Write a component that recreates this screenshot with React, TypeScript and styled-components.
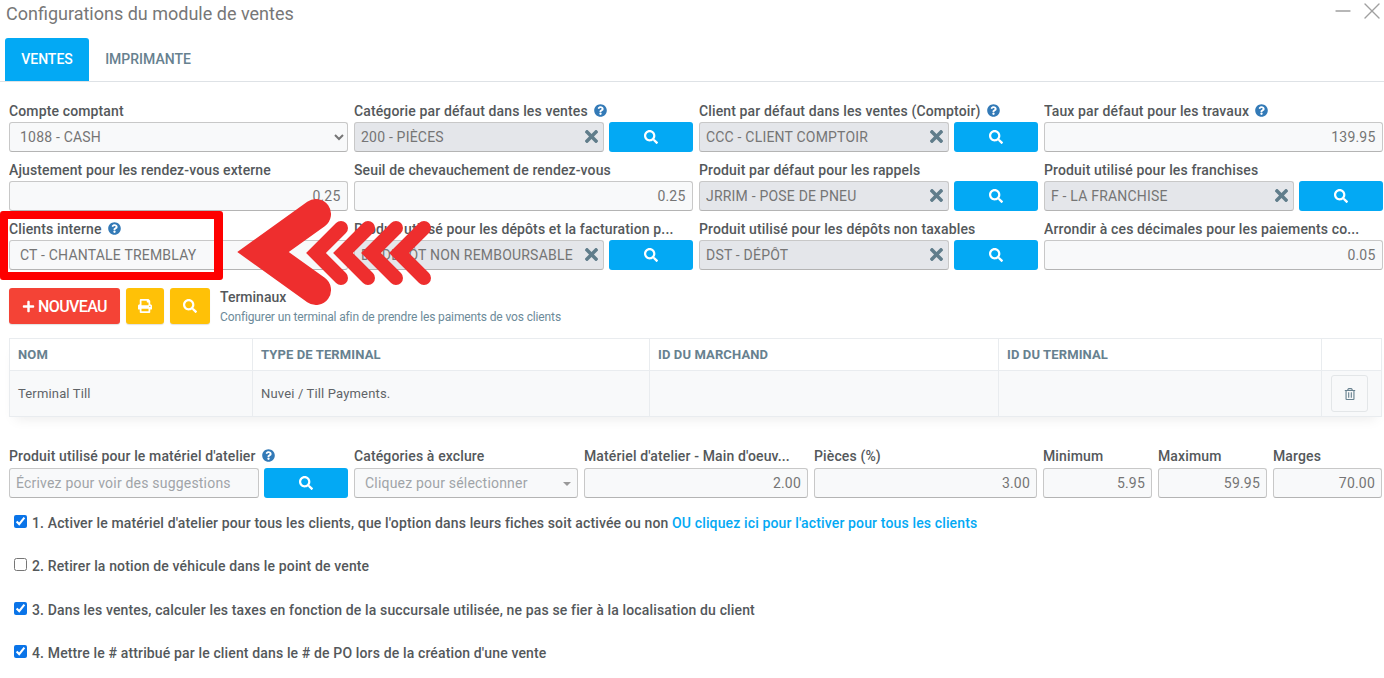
import styled, { createGlobalStyle } from 'styled-components';
import { FaPlus, FaPrint, FaQuestionCircle, FaRegTrashAlt, FaSearch, FaTimes } from 'react-icons/fa';
import { Minus, X } from 'lucide-react';

const GlobalStyle = createGlobalStyle`
  html, body {
    margin: 0;
    padding: 0;
    background: #fff;
    font-family: Roboto, "Liberation Sans", sans-serif;
    font-size: 14px;
    color: #555;
    overflow: hidden;
  }
`;

const Page = styled.div`
  position: relative;
  width: 1384px;
  height: 678px;
  overflow: hidden;
`;

const Header = styled.header`
  height: 38px;
  padding: 3px 0 0 6px;
  box-sizing: border-box;
  display: flex;
  justify-content: space-between;
  align-items: flex-start;
  color: #777;

  h1 {
    margin: 0;
    font-size: 18px;
    line-height: 22px;
    font-weight: 400;
  }

  .controls {
    display: flex;
    align-items: center;
    gap: 3px;
    margin: -6px -2px 0 0;
    color: #a0a0a0;
  }
`;

const Tabs = styled.nav`
  display: flex;
  height: 44px;
  padding-left: 5px;
  border-bottom: 1px solid #dee2e6;
  box-sizing: border-box;
`;

const Tab = styled.div<{ $active?: boolean }>`
  display: flex;
  align-items: center;
  justify-content: center;
  height: 43px;
  padding-bottom: 1px;
  box-sizing: border-box;
  width: ${p => (p.$active ? '84px' : '118px')};
  border-radius: 3px 3px 0 0;
  font-size: 14px;
  font-weight: 500;
  color: ${p => (p.$active ? '#fff' : '#67818f')};
  background: ${p => (p.$active ? '#03a9f4' : 'transparent')};
`;

const FieldGrid = styled.section`
  display: grid;
  grid-template-columns: repeat(4, 338.5px);
  column-gap: 6.5px;
  row-gap: 9px;
  padding: 20px 0 0 9px;
`;

const Field = styled.div`
  min-width: 0;
`;

const Label = styled.label`
  display: flex;
  align-items: center;
  gap: 6px;
  height: 20px;
  padding-bottom: 3px;
  box-sizing: border-box;
  font-size: 14px;
  font-weight: 500;
  letter-spacing: 0.13px;
  color: #54585b;
  white-space: nowrap;
  overflow: hidden;

  svg {
    flex: none;
    color: #337ab7;
    font-size: 13px;
  }
`;

const BottomLabel = styled(Label)`
  height: 22px;
`;

const Input = styled.input<{ $grey?: boolean; $right?: boolean; $inset?: boolean }>`
  display: block;
  width: 100%;
  height: 30px;
  box-sizing: border-box;
  padding: 0 6px 0 ${p => (p.$inset ? '10px' : '6px')};
  border: 1px solid #c8c8c8;
  border-bottom-color: #b4b4b4;
  border-radius: 3px;
  background: ${p => (p.$grey ? '#e4e6ea' : '#f8f9fa')};
  color: #757575;
  font: 400 14px Roboto, "Liberation Sans", sans-serif;
  letter-spacing: 0.2px;
  text-align: ${p => (p.$right ? 'right' : 'left')};
  outline: none;

  &::placeholder {
    color: #a0a4a8;
    opacity: 1;
  }
`;

const Select = styled.select`
  display: block;
  width: 100%;
  height: 30px;
  box-sizing: border-box;
  padding: 0 6px;
  border: 1px solid #c8c8c8;
  border-bottom-color: #b4b4b4;
  border-radius: 3px;
  background: #f8f9fa;
  color: #757575;
  font: 400 14px Roboto, "Liberation Sans", sans-serif;
  letter-spacing: 0.2px;
`;

const SearchRow = styled.div`
  display: flex;
  gap: 5px;
`;

const ClearableBox = styled.div`
  position: relative;
  flex: 1;
  min-width: 0;

  svg {
    position: absolute;
    top: 5px;
    right: 3px;
    font-size: 19px;
    color: #607d8b;
  }
`;

const SearchButton = styled.button`
  flex: none;
  width: 84px;
  height: 30px;
  border: 0;
  border-radius: 3px;
  background: #03a9f4;
  color: #fff;
  display: flex;
  align-items: center;
  justify-content: center;
  font-size: 14px;
  padding: 0;
`;

const Toolbar = styled.div`
  display: flex;
  align-items: flex-start;
  gap: 6px;
  margin-top: 18px;
  padding-left: 9px;
  height: 36px;
`;

const DangerButton = styled.button`
  width: 111px;
  height: 36px;
  border: 0;
  border-radius: 3px;
  background: #f44336;
  color: #fff;
  display: flex;
  align-items: center;
  justify-content: center;
  gap: 3px;
  font: 500 16px Roboto, "Liberation Sans", sans-serif;
  letter-spacing: -0.6px;
  padding: 0;
  box-shadow: 0 1px 1px rgba(0, 0, 0, 0.12);

  svg {
    font-size: 13px;
  }
`;

const WarningButton = styled.button<{ $width: number }>`
  width: ${p => p.$width}px;
  height: 36px;
  border: 0;
  border-radius: 3px;
  background: #ffc107;
  color: #fff;
  display: flex;
  align-items: center;
  justify-content: center;
  font-size: 14px;
  padding: 0;
  box-shadow: 0 1px 1px rgba(0, 0, 0, 0.12);
`;

const ToolbarText = styled.div`
  margin-left: 4px;

  strong {
    display: block;
    font-size: 14px;
    line-height: 18px;
    font-weight: 500;
    color: #54585b;
  }

  span {
    display: block;
    margin-top: 3px;
    font-size: 12px;
    line-height: 16px;
    letter-spacing: -0.13px;
    color: #6c8a99;
  }
`;

const TableWrap = styled.div`
  margin: 14px 2px 0 9px;
  box-shadow: 0 8px 12px -6px rgba(0, 0, 0, 0.08);
`;

const Table = styled.table`
  width: 100%;
  border-collapse: collapse;
  table-layout: fixed;

  th,
  td {
    border: 1px solid #e9ecef;
    padding: 0 8px;
    text-align: left;
  }

  th {
    height: 31px;
    font-size: 13px;
    font-weight: 700;
    letter-spacing: 0.12px;
    color: #67818f;
  }

  td {
    height: 45px;
    background: #f8f9fa;
    font-size: 13px;
    letter-spacing: 0.16px;
    color: #606468;
  }
`;

const TrashButton = styled.button`
  display: flex;
  align-items: center;
  justify-content: center;
  width: 37px;
  height: 37px;
  margin-left: 1px;
  padding: 0;
  border: 1px solid #e3e6e8;
  border-radius: 3px;
  background: #f8f9fa;
  color: #67818f;
  font-size: 12px;
`;

const BottomRow = styled.section`
  display: grid;
  grid-template-columns: 339px 224px 224px 223px 109px 109px 109px;
  column-gap: 6px;
  margin-top: 29px;
  padding-left: 9px;
`;

const SuggestRow = styled.div`
  display: flex;
  gap: 5px;
`;

const FakeSelect = styled.div`
  position: relative;
  height: 30px;
  box-sizing: border-box;
  padding-left: 10px;
  display: flex;
  align-items: center;
  border: 1px solid #c8c8c8;
  border-bottom-color: #b4b4b4;
  border-radius: 3px;
  background: #f8f9fa;
  color: #a0a4a8;
  letter-spacing: 0.2px;

  &::after {
    content: '';
    position: absolute;
    right: 6px;
    top: 13px;
    border: 4px solid transparent;
    border-top-color: #999;
    border-bottom: 0;
  }
`;

const Options = styled.div`
  display: flex;
  flex-direction: column;
  gap: 24.6px;
  margin-top: 15px;
  padding-left: 14px;
`;

const OptionRow = styled.label`
  display: flex;
  align-items: center;
  gap: 5px;
  height: 19px;
  font-size: 14px;
  font-weight: 500;
  letter-spacing: 0.14px;
  color: #54585b;
  white-space: nowrap;

  input {
    margin: 0 0 3px;
    width: 13px;
    height: 13px;
    accent-color: #0a74e8;
  }

  a {
    color: #03a9f4;
  }
`;

const RedFrame = styled.div`
  position: absolute;
  left: 0;
  top: 211px;
  width: 223px;
  height: 69px;
  box-sizing: border-box;
  border: 8px solid #fe0000;
  border-right-width: 9px;
  border-radius: 3px;
`;

const ArrowOverlay = styled.svg`
  position: absolute;
  left: 225px;
  top: 190px;
`;

type FieldDef = {
  label: string;
  help?: boolean;
  select?: string;
  pick?: string;
  number?: string;
  text?: string;
};

const fields: FieldDef[] = [
  { label: 'Compte comptant', select: '1088 - CASH' },
  { label: 'Catégorie par défaut dans les ventes', help: true, pick: '200 - PIÈCES' },
  { label: 'Client par défaut dans les ventes (Comptoir)', help: true, pick: 'CCC - CLIENT COMPTOIR' },
  { label: 'Taux par défaut pour les travaux', help: true, number: '139.95' },
  { label: 'Ajustement pour les rendez-vous externe', number: '0.25' },
  { label: 'Seuil de chevauchement de rendez-vous', number: '0.25' },
  { label: 'Produit par défaut pour les rappels', pick: 'JRRIM - POSE DE PNEU' },
  { label: 'Produit utilisé pour les franchises', pick: 'F - LA FRANCHISE' },
  { label: 'Clients interne', help: true, text: 'CT - CHANTALE TREMBLAY' },
  { label: 'Produit utilisé pour les dépôts et la facturation p...', pick: 'D - DÉPÔT NON REMBOURSABLE' },
  { label: 'Produit utilisé pour les dépôts non taxables', pick: 'DST - DÉPÔT' },
  { label: 'Arrondir à ces décimales pour les paiements co...', number: '0.05' },
];

function ConfigField({ field }: { field: FieldDef }) {
  return (
    <Field>
      <Label>
        {field.label}
        {field.help && <FaQuestionCircle />}
      </Label>
      {field.select && (
        <Select defaultValue={field.select}>
          <option>{field.select}</option>
        </Select>
      )}
      {field.number && <Input $right readOnly value={field.number} />}
      {field.text && <Input $inset readOnly value={field.text} />}
      {field.pick && (
        <SearchRow>
          <ClearableBox>
            <Input $grey readOnly value={field.pick} />
            <FaTimes />
          </ClearableBox>
          <SearchButton>
            <FaSearch />
          </SearchButton>
        </SearchRow>
      )}
    </Field>
  );
}

export default function App() {
  return (
    <Page>
      <GlobalStyle />
      <Header>
        <h1>Configurations du module de ventes</h1>
        <div className="controls">
          <Minus size={24} strokeWidth={1.3} />
          <X size={28} strokeWidth={1.2} />
        </div>
      </Header>

      <Tabs>
        <Tab $active>VENTES</Tab>
        <Tab>IMPRIMANTE</Tab>
      </Tabs>

      <FieldGrid>
        {fields.map(field => (
          <ConfigField key={field.label} field={field} />
        ))}
      </FieldGrid>

      <Toolbar>
        <DangerButton>
          <FaPlus />
          NOUVEAU
        </DangerButton>
        <WarningButton $width={38}>
          <FaPrint />
        </WarningButton>
        <WarningButton $width={40}>
          <FaSearch />
        </WarningButton>
        <ToolbarText>
          <strong>Terminaux</strong>
          <span>Configurer un terminal afin de prendre les paiments de vos clients</span>
        </ToolbarText>
      </Toolbar>

      <TableWrap>
        <Table>
          <colgroup>
            <col style={{ width: 243 }} />
            <col style={{ width: 397 }} />
            <col style={{ width: 349 }} />
            <col style={{ width: 323 }} />
            <col />
          </colgroup>
          <thead>
            <tr>
              <th>NOM</th>
              <th>TYPE DE TERMINAL</th>
              <th>ID DU MARCHAND</th>
              <th>ID DU TERMINAL</th>
              <th />
            </tr>
          </thead>
          <tbody>
            <tr>
              <td>Terminal Till</td>
              <td>Nuvei / Till Payments.</td>
              <td />
              <td />
              <td>
                <TrashButton>
                  <FaRegTrashAlt />
                </TrashButton>
              </td>
            </tr>
          </tbody>
        </Table>
      </TableWrap>

      <BottomRow>
        <Field>
          <BottomLabel>
            Produit utilisé pour le matériel d'atelier
            <FaQuestionCircle />
          </BottomLabel>
          <SuggestRow>
            <Input placeholder="Écrivez pour voir des suggestions" />
            <SearchButton>
              <FaSearch />
            </SearchButton>
          </SuggestRow>
        </Field>
        <Field>
          <BottomLabel>Catégories à exclure</BottomLabel>
          <FakeSelect>Cliquez pour sélectionner</FakeSelect>
        </Field>
        <Field>
          <BottomLabel>Matériel d'atelier - Main d'oeuv...</BottomLabel>
          <Input $right readOnly value="2.00" />
        </Field>
        <Field>
          <BottomLabel>Pièces (%)</BottomLabel>
          <Input $right readOnly value="3.00" />
        </Field>
        <Field>
          <BottomLabel>Minimum</BottomLabel>
          <Input $right readOnly value="5.95" />
        </Field>
        <Field>
          <BottomLabel>Maximum</BottomLabel>
          <Input $right readOnly value="59.95" />
        </Field>
        <Field>
          <BottomLabel>Marges</BottomLabel>
          <Input $right readOnly value="70.00" />
        </Field>
      </BottomRow>

      <Options>
        <OptionRow>
          <input type="checkbox" defaultChecked />
          <span>
            1. Activer le matériel d'atelier pour tous les clients, que l'option dans leurs fiches soit activée ou non{' '}
            <a>OU cliquez ici pour l'activer pour tous les clients</a>
          </span>
        </OptionRow>
        <OptionRow>
          <input type="checkbox" />
          <span>2. Retirer la notion de véhicule dans le point de vente</span>
        </OptionRow>
        <OptionRow>
          <input type="checkbox" defaultChecked />
          <span>3. Dans les ventes, calculer les taxes en fonction de la succursale utilisée, ne pas se fier à la localisation du client</span>
        </OptionRow>
        <OptionRow>
          <input type="checkbox" defaultChecked />
          <span>4. Mettre le # attribué par le client dans le # de PO lors de la création d'une vente</span>
        </OptionRow>
      </Options>

      <RedFrame />
      <ArrowOverlay width={220} height={125} viewBox="225 190 220 125">
        <g fill="none" stroke="#ee2e2e" strokeLinecap="round" strokeLinejoin="miter">
          <path d="M316 214 L263 252 L316 290" strokeWidth={30} />
          <path d="M341 228 L316 253 L341 278" strokeWidth={14} />
          <path d="M368 228 L343 253 L368 278" strokeWidth={14} />
          <path d="M396 228 L371 253 L396 278" strokeWidth={14} />
          <path d="M424 228 L399 253 L424 278" strokeWidth={14} />
        </g>
      </ArrowOverlay>
    </Page>
  );
}
